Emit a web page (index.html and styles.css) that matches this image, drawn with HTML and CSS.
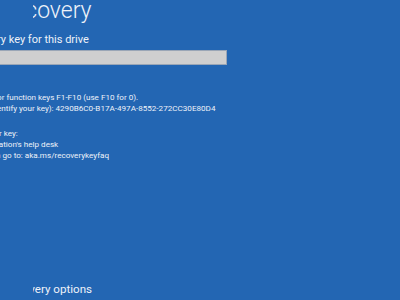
FILE: index.html
```html
<!DOCTYPE html>
<html lang="en">
<head>
<meta charset="utf-8">
<title>BitLocker recovery</title>
<link rel="stylesheet" href="styles.css">
</head>
<body>
<main class="screen">
  <div class="clip title-clip"><h1 class="title">BitLocker recovery</h1></div>
  <div class="content">
    <p class="prompt">Enter the recovery key for this drive</p>
    <div class="keybox"></div>
    <div class="info">
      <p>Use the number keys or function keys F1-F10 (use F10 for 0).</p>
      <p>Recovery key ID (to identify your key): 4290B6C0-B17A-497A-8552-272CC30E80D4</p>
    </div>
    <div class="howto">
      <p>Here's how to find your key:</p>
      <p>- Contact your organization's help desk</p>
      <p>- For more information go to: aka.ms/recoverykeyfaq</p>
    </div>
  </div>
  <div class="clip footer-clip"><p class="footer">Press Esc for more recovery options</p></div>
</main>
</body>
</html>
```
FILE: styles.css
```css
html, body {
  margin: 0;
  padding: 0;
  width: 400px;
  height: 300px;
  overflow: hidden;
  background: #2366b3;
}
body {
  font-family: Roboto, "Open Sans", sans-serif;
  color: #eef2f9;
}
.screen {
  display: flex;
  flex-direction: column;
  height: 300px;
}
p, h1 { margin: 0; white-space: nowrap; }
.clip {
  margin-left: 33px;
  overflow: hidden;
}
.title {
  font-weight: 300;
  font-size: 23px;
  line-height: 30px;
  margin-left: -127px;
  margin-top: -4px;
}
.content {
  margin-left: -80px;
}
.prompt {
  font-size: 11px;
  line-height: 16px;
  margin-top: 6px;
  margin-left: -2px;
}
.keybox {
  width: 305px;
  height: 13px;
  margin-top: 2px;
  background: #cfcfcf;
  border: 1px solid #9aa6b6;
}
.info {
  margin-top: 27px;
  font-size: 8.1px;
  line-height: 11px;
}
.howto {
  margin-top: 14px;
  font-size: 8.1px;
  line-height: 11px;
}
.footer-clip {
  margin-top: auto;
  margin-bottom: 3px;
}
.footer {
  font-size: 11.6px;
  line-height: 16px;
  margin-left: -127px;
}
```
